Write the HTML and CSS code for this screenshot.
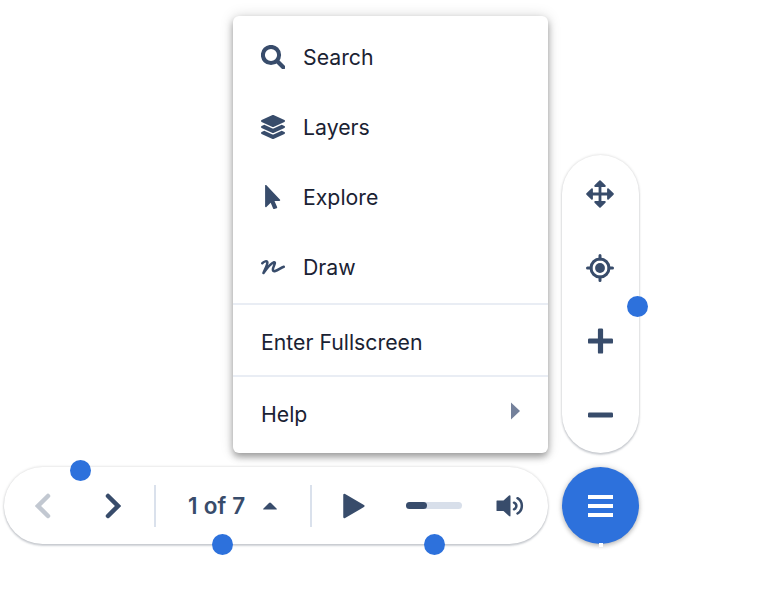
FILE: index.html
```html
<!DOCTYPE html>
<html lang="en">
<head>
<meta charset="utf-8">
<title>Viewer controls</title>
<link rel="stylesheet" href="styles.css">
</head>
<body>
<main class="controls">
  <nav class="menu">
    <div class="group tools">
      <div class="item"><svg width="24" height="24" viewBox="0 0 24 24"><circle cx="10" cy="10" r="8.100" fill="none" stroke="currentColor" stroke-width="4"/><path d="M16.300 16.300L22.300 22.300" stroke="currentColor" stroke-width="4.200" stroke-linecap="round"/></svg><span>Search</span></div>
      <div class="item"><svg width="24" height="24" viewBox="0 0 512 512"><path fill="currentColor" d="M12.400 148l232.900 105.700c6.800 3.100 14.500 3.100 21.300 0L499.600 148c16.600-7.500 16.600-32.500 0-40L266.700 2.300a25.600 25.600 0 0 0-21.300 0L12.400 108c-16.500 7.500-16.500 32.500 0 40zm487.200 88.300l-58.100-26.300-161.600 73.300c-7.600 3.400-15.600 5.200-23.900 5.200s-16.300-1.700-23.900-5.200L70.500 210 12.400 236.300c-16.500 7.500-16.500 32.500 0 40l232.900 105.600c6.800 3.100 14.500 3.100 21.300 0l233-105.600c16.600-7.500 16.600-32.500 0-40zm0 127.800l-57.900-26.200-161.900 73.400c-7.500 3.400-15.600 5.200-23.800 5.200s-16.300-1.700-23.900-5.200L70.300 337.900 12.400 364.100c-16.500 7.500-16.500 32.500 0 40l232.900 105.600c6.800 3.100 14.500 3.100 21.300 0l233-105.600c16.600-7.500 16.600-32.500 0-40z"/></svg><span>Layers</span></div>
      <div class="item"><svg width="24" height="24" viewBox="0 0 24 24"><path fill="currentColor" d="M4.100.5C4.100-.1 4.800-.3 5.200.1L18.900 14.600C19.500 15.300 19.100 16 18.300 16H13.500L16.100 22C16.300 22.500 16.100 23 15.600 23.200L13.300 24C12.800 24.200 12.300 24 12.100 23.500L9.700 17.800 5.400 22C4.900 22.500 4.100 22.200 4.100 21.500Z"/></svg><span>Explore</span></div>
      <div class="item"><svg width="24" height="24" viewBox="0 0 24 24"><path fill="none" stroke="currentColor" stroke-width="2.500" stroke-linecap="round" stroke-linejoin="round" d="M1.300 8.300C2.600 6.500 6.400 5.200 6.400 7.600C6.200 10.500 3.800 14.500 2.500 18C5 14.500 9.500 8.300 13 7.300C14.500 7 13.800 9 12.800 11.200C11.200 14.700 11.800 17 14.200 16C17.400 15 20 12.500 22.800 11.800"/></svg><span>Draw</span></div>
    </div>
    <div class="group single">Enter Fullscreen</div>
    <div class="group single help"><span>Help</span><svg width="9" height="18" viewBox="0 0 9 18"><path fill="currentColor" d="M0 .5L9 9L0 17.500Z"/></svg></div>
  </nav>

  <aside class="zoom-bar">
    <svg width="28" height="28" viewBox="0 0 28 28"><path d="M14 5V23M5 14H23" stroke="currentColor" stroke-width="2.800"/><path fill="currentColor" stroke="currentColor" stroke-width="1.800" stroke-linejoin="round" d="M14 1.100L18.800 6H9.200ZM14 26.900L18.800 22H9.200ZM1.100 14L6 9.200V18.800ZM26.900 14L22 9.200V18.800Z"/></svg>
    <svg width="28" height="28" viewBox="0 0 28 28"><circle cx="14" cy="14" r="9" fill="none" stroke="currentColor" stroke-width="3"/><circle cx="14" cy="14" r="4.900" fill="currentColor"/><path d="M14 1.500V5M14 23V26.500M1.500 14H5M23 14H26.500" stroke="currentColor" stroke-width="3" stroke-linecap="round"/></svg>
    <svg width="28" height="28" viewBox="0 0 28 28"><path fill="currentColor" d="M13.100 1.500h2.800a1.200 1.200 0 0 1 1.200 1.200v8.800h8.700a1.200 1.200 0 0 1 1.200 1.200v2.700a1.200 1.200 0 0 1-1.200 1.200h-8.700v8.800a1.200 1.200 0 0 1-1.200 1.200h-2.800a1.200 1.200 0 0 1-1.200-1.200v-8.800H3.200A1.200 1.200 0 0 1 2 15.400v-2.700a1.200 1.200 0 0 1 1.200-1.200h8.700V2.700a1.200 1.200 0 0 1 1.200-1.200z"/></svg>
    <svg width="28" height="28" viewBox="0 0 28 28"><rect x="2" y="11.500" width="25" height="5.100" rx="1.300" fill="currentColor"/></svg>
    <i class="dot dot-side"></i>
  </aside>

  <section class="player">
    <svg class="prev" width="16" height="26" viewBox="0 0 16 26"><path d="M13 3L3 13L13 23" fill="none" stroke="currentColor" stroke-width="4.500" stroke-linecap="round"/></svg>
    <svg class="next" width="16" height="26" viewBox="0 0 16 26"><path d="M3 3L13 13L3 23" fill="none" stroke="currentColor" stroke-width="4.500" stroke-linecap="round"/></svg>
    <span class="rule"></span>
    <span class="count">1 of 7</span>
    <svg class="up" width="14" height="8" viewBox="0 0 14 8"><path fill="currentColor" d="M.6 7.500Q-.2 7.500.5 6.600L6 .9Q7 0 8 .9L13.500 6.600Q14.200 7.500 13.400 7.500Z"/></svg>
    <span class="rule second"></span>
    <svg class="play" width="22" height="26" viewBox="0 0 22 26"><path fill="currentColor" stroke="currentColor" stroke-width="2.500" stroke-linejoin="round" d="M1.500 2V24L20.300 13Z"/></svg>
    <span class="track"><span class="level"></span></span>
    <svg class="volume" width="28" height="24" viewBox="0 0 28 24"><path fill="currentColor" d="M1 6.500H7.500L13 1.500Q14.500.7 14.500 2.200V21.500Q14.500 23 13 22L7.500 17H1Q.5 17 .5 16.500V7Q.5 6.500 1 6.500Z"/><path d="M18 8.700Q20.400 9.700 20.400 12T18 15.300M21.500 4.200C27.300 7.500 27.300 16.200 21.500 19.500" fill="none" stroke="currentColor" stroke-width="2.500" stroke-linecap="round"/></svg>
    <i class="dot dot-top"></i>
    <i class="dot dot-count"></i>
    <i class="dot dot-track"></i>
  </section>

  <button class="menu-button" aria-label="Menu"><span class="bars"><i></i><i></i><i></i></span></button>
</main>
</body>
</html>
```
FILE: styles.css
```css
* { box-sizing: border-box; }
body {
  margin: 0;
  min-height: 605px;
  padding: 16px 0 0 4px;
  background: #fff;
  color: #1a2233;
  font: 400 21.250px/28px Inter, "Liberation Sans", sans-serif;
  font-optical-sizing: none;
}
svg { display: block; flex: none; color: #384c6b; }
.controls {
  display: grid;
  grid-template-columns: 544px 77px;
  grid-template-rows: 437px 77px;
  gap: 14px;
}
.menu {
  justify-self: end;
  width: 315px;
  padding-top: 6px;
  border-radius: 6px;
  background: #fff;
  box-shadow: 0 4px 7px rgba(0, 0, 0, .34), 0 0 14px rgba(0, 0, 0, .15);
}
.tools { height: 283px; border-bottom: 2px solid #e9edf4; }
.item {
  display: flex;
  align-items: center;
  gap: 18px;
  height: 70px;
  padding-left: 28px;
}
.single {
  display: flex;
  align-items: center;
  height: 72px;
  padding: 4px 28px 0;
  border-bottom: 2px solid #e9edf4;
}
.single.help { justify-content: space-between; height: 74px; padding-top: 0; border: 0; }
.help svg { color: #74819b; margin-bottom: 6px; }
.zoom-bar, .player {
  position: relative;
  display: flex;
  align-items: center;
  background: #fff;
  border-radius: 39px;
  box-shadow: 0 2px 2px rgba(45, 62, 85, .2), 0 0 3px rgba(0, 0, 0, .18);
}
.zoom-bar {
  align-self: end;
  flex-direction: column;
  height: 298px;
  padding: 25px 1px 0 0;
  gap: 45.500px;
}
.prev { margin-left: 31px; opacity: .3; }
.next { margin-left: 54px; }
.rule { width: 2px; height: 42px; margin-left: 33px; background: #dae1ec; }
.count { width: 60px; margin-left: 32px; padding-top: 1px; color: #384c6b; font-weight: 600; font-size: 22.500px; word-spacing: .5px; white-space: nowrap; }
.up { margin-left: 15px; }
.second { margin-left: 33px; }
.play { margin-left: 31px; }
.track { width: 56px; height: 7px; margin-left: 41px; border-radius: 4px; background: #d8dfea; }
.level { display: block; width: 21px; height: 7px; border-radius: 4px; background: #384c6b; }
.volume { margin-left: 33.500px; }
.dot { position: absolute; width: 21px; height: 21px; border-radius: 50%; background: #2d71dc; }
.dot-side { left: 64.500px; top: 141px; }
.dot-top { left: 66px; top: -7px; }
.dot-count { left: 208px; top: 67px; }
.dot-track { left: 419.500px; top: 67px; }
.menu-button {
  display: flex;
  align-items: center;
  justify-content: center;
  position: relative;
  padding: 0;
  border: 0;
  border-radius: 50%;
  background: #2d71dc;
  box-shadow: 0 2px 4px rgba(0, 0, 0, .2), 0 0 6px rgba(0, 0, 0, .15);
}
.menu-button::after {
  content: "";
  position: absolute;
  left: 37px;
  bottom: -3px;
  width: 4px;
  height: 4px;
  background: #fff;
}
.bars { display: grid; gap: 5px; }
.bars i { width: 25px; height: 4px; background: #fff; }
```
